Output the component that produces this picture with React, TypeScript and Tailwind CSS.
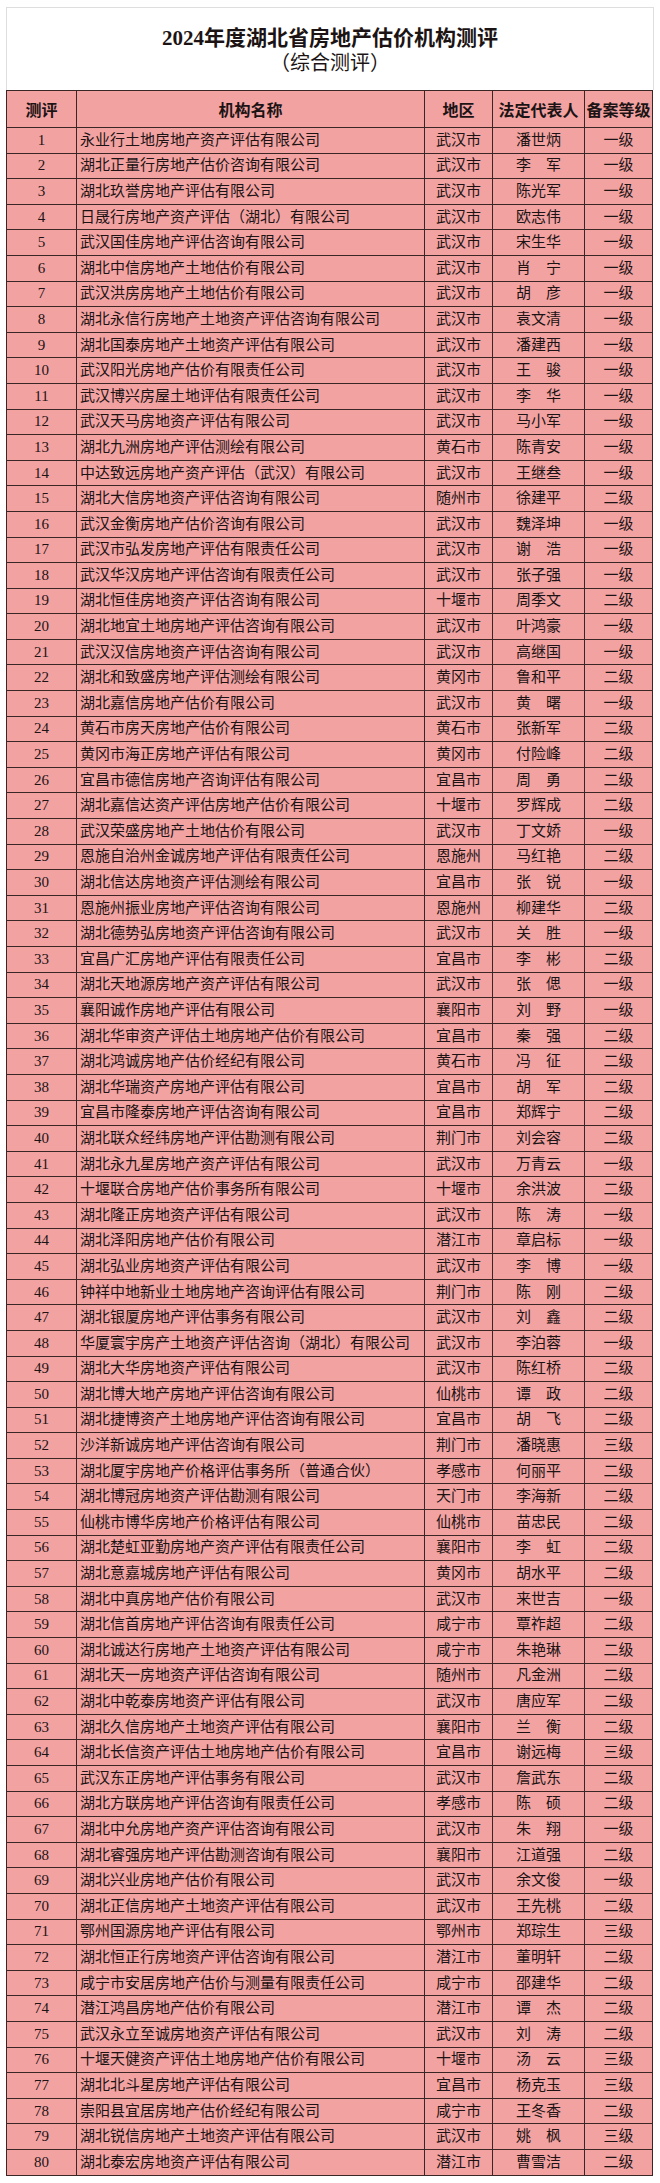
// 2024年度湖北省房地产估价机构测评 — ranking table

const ROWS: string[] = [
  "永业行土地房地产资产评估有限公司|武汉市|潘世炳|一级",
  "湖北正量行房地产估价咨询有限公司|武汉市|李　军|一级",
  "湖北玖誉房地产评估有限公司|武汉市|陈光军|一级",
  "日晟行房地产资产评估（湖北）有限公司|武汉市|欧志伟|一级",
  "武汉国佳房地产评估咨询有限公司|武汉市|宋生华|一级",
  "湖北中信房地产土地估价有限公司|武汉市|肖　宁|一级",
  "武汉洪房房地产土地估价有限公司|武汉市|胡　彦|一级",
  "湖北永信行房地产土地资产评估咨询有限公司|武汉市|袁文清|一级",
  "湖北国泰房地产土地资产评估有限公司|武汉市|潘建西|一级",
  "武汉阳光房地产估价有限责任公司|武汉市|王　骏|一级",
  "武汉博兴房屋土地评估有限责任公司|武汉市|李　华|一级",
  "武汉天马房地资产评估有限公司|武汉市|马小军|一级",
  "湖北九洲房地产评估测绘有限公司|黄石市|陈青安|一级",
  "中达致远房地产资产评估（武汉）有限公司|武汉市|王继叁|一级",
  "湖北大信房地资产评估咨询有限公司|随州市|徐建平|二级",
  "武汉金衡房地产估价咨询有限公司|武汉市|魏泽坤|一级",
  "武汉市弘发房地产评估有限责任公司|武汉市|谢　浩|一级",
  "武汉华汉房地产评估咨询有限责任公司|武汉市|张子强|一级",
  "湖北恒佳房地资产评估咨询有限公司|十堰市|周季文|二级",
  "湖北地宜土地房地产评估咨询有限公司|武汉市|叶鸿豪|一级",
  "武汉汉信房地资产评估咨询有限公司|武汉市|高继国|一级",
  "湖北和致盛房地产评估测绘有限公司|黄冈市|鲁和平|二级",
  "湖北嘉信房地产估价有限公司|武汉市|黄　曙|一级",
  "黄石市房天房地产估价有限公司|黄石市|张新军|二级",
  "黄冈市海正房地产评估有限公司|黄冈市|付险峰|二级",
  "宜昌市德信房地产咨询评估有限公司|宜昌市|周　勇|二级",
  "湖北嘉信达资产评估房地产估价有限公司|十堰市|罗辉成|二级",
  "武汉荣盛房地产土地估价有限公司|武汉市|丁文娇|一级",
  "恩施自治州金诚房地产评估有限责任公司|恩施州|马红艳|二级",
  "湖北信达房地资产评估测绘有限公司|宜昌市|张　锐|一级",
  "恩施州振业房地产评估咨询有限公司|恩施州|柳建华|二级",
  "湖北德势弘房地资产评估咨询有限公司|武汉市|关　胜|一级",
  "宜昌广汇房地产评估有限责任公司|宜昌市|李　彬|二级",
  "湖北天地源房地产资产评估有限公司|武汉市|张　偲|一级",
  "襄阳诚作房地产评估有限公司|襄阳市|刘　野|一级",
  "湖北华审资产评估土地房地产估价有限公司|宜昌市|秦　强|二级",
  "湖北鸿诚房地产估价经纪有限公司|黄石市|冯　征|二级",
  "湖北华瑞资产房地产评估有限公司|宜昌市|胡　军|二级",
  "宜昌市隆泰房地产评估咨询有限公司|宜昌市|郑辉宁|二级",
  "湖北联众经纬房地产评估勘测有限公司|荆门市|刘会容|二级",
  "湖北永九星房地产资产评估有限公司|武汉市|万青云|一级",
  "十堰联合房地产估价事务所有限公司|十堰市|余洪波|二级",
  "湖北隆正房地资产评估有限公司|武汉市|陈　涛|一级",
  "湖北泽阳房地产估价有限公司|潜江市|章启标|一级",
  "湖北弘业房地资产评估有限公司|武汉市|李　博|一级",
  "钟祥中地新业土地房地产咨询评估有限公司|荆门市|陈　刚|二级",
  "湖北银厦房地产评估事务有限公司|武汉市|刘　鑫|二级",
  "华厦寰宇房产土地资产评估咨询（湖北）有限公司|武汉市|李泊蓉|一级",
  "湖北大华房地资产评估有限公司|武汉市|陈红桥|二级",
  "湖北博大地产房地产评估咨询有限公司|仙桃市|谭　政|二级",
  "湖北捷博资产土地房地产评估咨询有限公司|宜昌市|胡　飞|二级",
  "沙洋新诚房地产评估咨询有限公司|荆门市|潘晓惠|三级",
  "湖北厦宇房地产价格评估事务所（普通合伙）|孝感市|何丽平|二级",
  "湖北博冠房地资产评估勘测有限公司|天门市|李海新|二级",
  "仙桃市博华房地产价格评估有限公司|仙桃市|苗忠民|二级",
  "湖北楚虹亚勤房地产资产评估有限责任公司|襄阳市|李　虹|二级",
  "湖北意嘉城房地产评估有限公司|黄冈市|胡水平|二级",
  "湖北中真房地产估价有限公司|武汉市|来世吉|一级",
  "湖北信首房地产评估咨询有限责任公司|咸宁市|覃祚超|二级",
  "湖北诚达行房地产土地资产评估有限公司|咸宁市|朱艳琳|二级",
  "湖北天一房地资产评估咨询有限公司|随州市|凡金洲|二级",
  "湖北中乾泰房地资产评估有限公司|武汉市|唐应军|二级",
  "湖北久信房地产土地资产评估有限公司|襄阳市|兰　衡|二级",
  "湖北长信资产评估土地房地产估价有限公司|宜昌市|谢远梅|三级",
  "武汉东正房地产评估事务有限公司|武汉市|詹武东|二级",
  "湖北方联房地产评估咨询有限责任公司|孝感市|陈　硕|二级",
  "湖北中允房地产资产评估咨询有限公司|武汉市|朱　翔|一级",
  "湖北睿强房地产评估勘测咨询有限公司|襄阳市|江道强|二级",
  "湖北兴业房地产估价有限公司|武汉市|余文俊|一级",
  "湖北正信房地产土地资产评估有限公司|武汉市|王先桃|二级",
  "鄂州国源房地产评估有限公司|鄂州市|郑琮生|三级",
  "湖北恒正行房地资产评估咨询有限公司|潜江市|董明轩|二级",
  "咸宁市安居房地产估价与测量有限责任公司|咸宁市|邵建华|二级",
  "潜江鸿昌房地产估价有限公司|潜江市|谭　杰|二级",
  "武汉永立至诚房地资产评估有限公司|武汉市|刘　涛|二级",
  "十堰天健资产评估土地房地产估价有限公司|十堰市|汤　云|三级",
  "湖北北斗星房地产评估有限公司|宜昌市|杨克玉|三级",
  "崇阳县宜居房地产估价经纪有限公司|咸宁市|王冬香|二级",
  "湖北锐信房地产土地资产评估有限公司|武汉市|姚　枫|三级",
  "湖北泰宏房地资产评估有限公司|潜江市|曹雪洁|二级",
];

const HEADERS = ["测评", "机构名称", "地区", "法定代表人", "备案等级"];

// column widths incl. right border: 70 | 348 | 68 | 92 | 68
const GRID = "grid grid-cols-[70px_348px_68px_92px_68px]";
const CELL = "flex items-center border-r border-b border-[#3b2626] overflow-hidden whitespace-nowrap";

function Row({ index, line }: { index: number; line: string }) {
  const [name, region, person, grade] = line.split("|");
  return (
    <div className={`${GRID} h-[25.6px]`}>
      <div className={`${CELL} justify-center font-['Liberation_Serif'] text-[15px]`}>{index}</div>
      <div className={`${CELL} pl-[3px]`}>{name}</div>
      <div className={`${CELL} justify-center`}>{region}</div>
      <div className={`${CELL} justify-center`}>{person}</div>
      <div className={`${CELL} justify-center`}>{grade}</div>
    </div>
  );
}

export default function App() {
  return (
    <div className="w-[660px] h-[2183px] bg-white pt-[7px] px-[6px] font-['Liberation_Serif','Noto_Sans_CJK_SC',serif] text-[#1c1414]">
      {/* ── Title ── */}
      <div className="border border-b-0 border-[#dedede] pt-[18px] pb-[14px] text-center">
        <div className="h-[25px] text-[21px] leading-[25px] font-bold">2024年度湖北省房地产估价机构测评</div>
        <div className="h-[25px] text-[20px] leading-[25px]">（综合测评）</div>
      </div>

      {/* ── Table ── */}
      <div className="w-[647px] border-l border-t border-[#3b2626] bg-[#f3a2a2] text-[15px] leading-none">
        <div className={`${GRID} h-[37px] font-['Noto_Sans_CJK_SC',sans-serif] font-bold text-[16px]`}>
          {HEADERS.map((h) => (
            <div key={h} className={`${CELL} justify-center`}>
              {h}
            </div>
          ))}
        </div>
        {ROWS.map((line, i) => (
          <Row key={i} index={i + 1} line={line} />
        ))}
      </div>
    </div>
  );
}
